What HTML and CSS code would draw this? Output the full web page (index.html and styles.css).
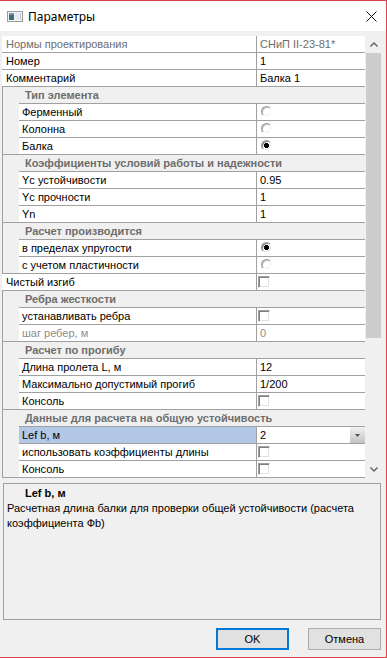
FILE: index.html
```html
<!DOCTYPE html>
<html lang="ru">
<head>
  <meta charset="UTF-8">
  <title>Параметры</title>
  <link rel="stylesheet" href="styles.css">
</head>
<body>
  <div class="window">
    <div class="titlebar">
      <svg class="app-icon" width="16" height="11" viewBox="0 0 16 11">
        <rect x="0.5" y="0.5" width="15" height="10" fill="#f6f6f6" stroke="#9c9c9c"/>
        <rect x="2" y="2" width="5" height="7" fill="#3e6f79"/>
        <rect x="2" y="2" width="5" height="2" fill="#6f9aa3"/>
        <rect x="8" y="2" width="4" height="7" fill="#e4e8ec"/>
        <rect x="13" y="2" width="1" height="7" fill="#b9c2c9"/>
      </svg>
      <span class="title">Параметры</span>
      <svg class="close" width="11" height="11" viewBox="0 0 11 11">
        <path d="M0.5 0.5 L10.5 10.5 M10.5 0.5 L0.5 10.5" stroke="#111" stroke-width="1" fill="none"/>
      </svg>
    </div>

    <div class="client">
      <div class="propgrid">
        <div class="rows">
          <div class="row readonly"><span class="label">Нормы проектирования</span><span class="value">СНиП II-23-81*</span></div>
          <div class="row"><span class="label">Номер</span><span class="value">1</span></div>
          <div class="row"><span class="label">Комментарий</span><span class="value">Балка 1</span></div>

          <div class="cat">
            <div class="cat-head">Тип элемента</div>
            <div class="cat-body">
              <div class="row"><span class="label">Ферменный</span><span class="value"><i class="radio"></i></span></div>
              <div class="row"><span class="label">Колонна</span><span class="value"><i class="radio"></i></span></div>
              <div class="row"><span class="label">Балка</span><span class="value"><i class="radio checked"></i></span></div>
            </div>
          </div>

          <div class="cat">
            <div class="cat-head">Коэффициенты условий работы и надежности</div>
            <div class="cat-body">
              <div class="row"><span class="label">Yc устойчивости</span><span class="value">0.95</span></div>
              <div class="row"><span class="label">Yc прочности</span><span class="value">1</span></div>
              <div class="row"><span class="label">Yn</span><span class="value">1</span></div>
            </div>
          </div>

          <div class="cat">
            <div class="cat-head">Расчет производится</div>
            <div class="cat-body">
              <div class="row"><span class="label">в пределах упругости</span><span class="value"><i class="radio checked"></i></span></div>
              <div class="row"><span class="label">с учетом пластичности</span><span class="value"><i class="radio"></i></span></div>
            </div>
          </div>

          <div class="row"><span class="label">Чистый изгиб</span><span class="value"><i class="check"></i></span></div>

          <div class="cat">
            <div class="cat-head">Ребра жесткости</div>
            <div class="cat-body">
              <div class="row"><span class="label">устанавливать ребра</span><span class="value"><i class="check"></i></span></div>
              <div class="row disabled"><span class="label">шаг ребер, м</span><span class="value">0</span></div>
            </div>
          </div>

          <div class="cat">
            <div class="cat-head">Расчет по прогибу</div>
            <div class="cat-body">
              <div class="row"><span class="label">Длина пролета L, м</span><span class="value">12</span></div>
              <div class="row"><span class="label">Максимально допустимый прогиб</span><span class="value">1/200</span></div>
              <div class="row"><span class="label">Консоль</span><span class="value"><i class="check"></i></span></div>
            </div>
          </div>

          <div class="cat">
            <div class="cat-head">Данные для расчета на общую устойчивость</div>
            <div class="cat-body">
              <div class="row selected">
                <span class="label">Lef b, м</span>
                <span class="value combo">2<span class="drop"><svg width="5" height="3" viewBox="0 0 5 3"><path d="M0 0 H5 L2.5 3 Z" fill="#505050"/></svg></span></span>
              </div>
              <div class="row"><span class="label">использовать коэффициенты длины</span><span class="value"><i class="check"></i></span></div>
              <div class="row"><span class="label">Консоль</span><span class="value"><i class="check"></i></span></div>
            </div>
          </div>
        </div>

        <div class="scrollbar">
          <div class="arrow">
            <svg width="8" height="5" viewBox="0 0 8 5"><path d="M0.5 4.5 L4 1 L7.5 4.5" stroke="#606060" stroke-width="1.4" fill="none"/></svg>
          </div>
          <div class="track"><div class="thumb"></div></div>
          <div class="arrow">
            <svg width="8" height="5" viewBox="0 0 8 5"><path d="M0.5 0.5 L4 4 L7.5 0.5" stroke="#606060" stroke-width="1.4" fill="none"/></svg>
          </div>
        </div>
      </div>

      <div class="help">
        <div class="help-title">Lef b, м</div>
        <div class="help-text">Расчетная длина балки для проверки общей устойчивости (расчета коэффициента Фb)</div>
      </div>

      <div class="buttons">
        <button class="btn default">OK</button>
        <button class="btn">Отмена</button>
      </div>
    </div>
  </div>
</body>
</html>
```

FILE: styles.css
```css
body {
  margin: 0;
  font-family: "Liberation Sans", Arial, sans-serif;
  font-size: 11px;
  color: #000;
}
.window {
  width: 387px;
  height: 658px;
  box-sizing: border-box;
  border: 1px solid #d9434c;
  border-left: none;
  background-color: #f0f0f0;
  display: flex;
  flex-direction: column;
}
.titlebar {
  height: 30px;
  flex-shrink: 0;
  background: #fff;
  display: flex;
  align-items: center;
}
.app-icon {
  margin-left: 7px;
}
.title {
  margin-left: 5px;
  font-family: "Noto Sans", "Liberation Sans", sans-serif;
  font-size: 12px;
}
.close {
  margin-left: auto;
  margin-right: 9px;
}
.client {
  flex: 1;
  padding: 5px 4px 0 2px;
  display: flex;
  flex-direction: column;
}
.propgrid {
  display: flex;
  height: 442px;
}
.rows {
  flex: 1;
}
.row {
  display: flex;
  height: 16px;
  line-height: 16px;
  border-bottom: 1px solid #a0a0a0;
  background: #fff;
}
.label {
  flex: 1;
  padding-left: 4px;
  white-space: nowrap;
  overflow: hidden;
}
.value {
  width: 109px;
  box-sizing: border-box;
  border-left: 1px solid #a0a0a0;
  padding-left: 3px;
  white-space: nowrap;
}
.readonly .label, .readonly .value {
  color: #6d6d6d;
}
.disabled .label, .disabled .value {
  color: #8d8d8d;
}
.cat {
  border-left: 1px solid #a0a0a0;
  border-bottom: 1px solid #a0a0a0;
  background: #f0f0f0;
}
.cat-head {
  height: 16px;
  line-height: 16px;
  padding-left: 22px;
  font-weight: bold;
  color: #6d6d6d;
  white-space: nowrap;
}
.cat-body {
  padding-left: 16px;
}
.cat-body .row {
  border-bottom: none;
  border-top: 1px solid #a0a0a0;
}
.cat-body .label {
  padding-left: 3px;
}
.selected .label {
  background: #b3c7e7;
}
.combo {
  display: flex;
}
.drop {
  margin-left: auto;
  width: 15px;
  height: 16px;
  background: linear-gradient(#f2f2f2, #c2c2c2);
  display: flex;
  align-items: center;
  justify-content: center;
}
.radio {
  display: block;
  width: 11px;
  height: 11px;
  margin: 2px 0 0 1px;
  box-sizing: border-box;
  border-radius: 50%;
  border: 1px solid;
  border-color: #9a9a9a #fff #fff #9a9a9a;
  box-shadow: inset 1px 1px #bdbdbd, inset -1px -1px #f0f0f0;
  background: #fff;
}
.radio.checked {
  background: radial-gradient(circle, #000 2.3px, #fff 2.8px);
  box-shadow: inset 1px 1px #808080, inset -1px -1px #e3e3e3;
}
.check {
  display: block;
  width: 12px;
  height: 12px;
  margin: 2px 0 0 -2px;
  box-sizing: border-box;
  border: 1px solid;
  border-color: #a0a0a0 #fff #fff #a0a0a0;
  box-shadow: inset 1px 1px #808080, inset -1px -1px #e3e3e3;
  background: #fff;
}
.scrollbar {
  width: 17px;
  display: flex;
  flex-direction: column;
}
.arrow {
  height: 17px;
  display: flex;
  align-items: center;
  justify-content: center;
}
.track {
  flex: 1;
  padding: 0 1px;
}
.thumb {
  height: 285px;
  background: #cdcdcd;
}
.help {
  margin: 5px 1px 0 1px;
  height: 137px;
  box-sizing: border-box;
  border: 1px solid #a0a0a0;
  padding: 2px 3px;
  line-height: 15px;
}
.help-title {
  font-weight: bold;
  padding-left: 18px;
}
.buttons {
  display: flex;
  justify-content: flex-end;
  gap: 19px;
  margin: 8px 1px 0 0;
}
.btn {
  width: 73px;
  height: 22px;
  padding: 0;
  font-family: "Liberation Sans", Arial, sans-serif;
  font-size: 11px;
  color: #000;
  background: #e1e1e1;
  border: 1px solid #adadad;
}
.btn.default {
  border: 2px solid #0078d7;
}
```
